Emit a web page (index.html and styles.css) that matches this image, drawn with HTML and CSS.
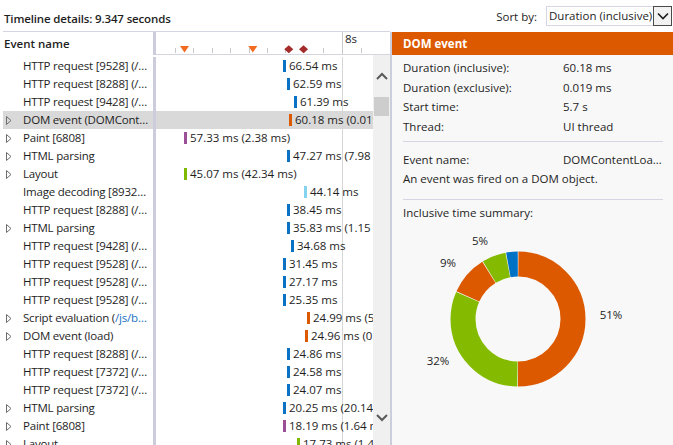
FILE: index.html
```html
<!DOCTYPE html>
<html lang="en">
<head>
<meta charset="utf-8">
<title>Timeline details</title>
<link rel="stylesheet" href="styles.css">
</head>
<body>
<div class="app">
  <header class="topbar">
    <div class="title">Timeline details: 9.347 seconds</div>
    <div class="sort">
      <span class="sort-label">Sort by:</span>
      <div class="select">
        <span class="select-text">Duration (inclusive)</span>
        <span class="select-btn"><svg width="12" height="8" viewBox="0 0 12 8"><polyline points="1,1.5 6,6.5 11,1.5" fill="none" stroke="#1e1e1e" stroke-width="1.6"/></svg></span>
      </div>
    </div>
  </header>
  <div class="main">
    <section class="events">
      <div class="ev-head">
        <div class="col-name">Event name</div>
        <div class="split"></div>
        <div class="ruler">
          <svg width="234" height="22" viewBox="0 0 234 22">
            <g stroke="#c9c9c9" stroke-width="1">
              <line x1="19.5" y1="16" x2="19.5" y2="21"/>
              <line x1="37.5" y1="16" x2="37.5" y2="21"/>
              <line x1="56.5" y1="16" x2="56.5" y2="21"/>
              <line x1="74.5" y1="16" x2="74.5" y2="21"/>
              <line x1="93.5" y1="16" x2="93.5" y2="21"/>
              <line x1="111.5" y1="16" x2="111.5" y2="21"/>
              <line x1="129.5" y1="16" x2="129.5" y2="21"/>
              <line x1="148.5" y1="16" x2="148.5" y2="21"/>
              <line x1="167.5" y1="16" x2="167.5" y2="21"/>
              <line x1="205.5" y1="16" x2="205.5" y2="21"/>
              <line x1="186.5" y1="0" x2="186.5" y2="22"/>
            </g>
            <text x="189" y="11" class="ruler-label">8s</text>
            <polygon points="24,14 33,14 28.5,20.5" fill="#f26b21"/>
            <polygon points="92.3,14 101.3,14 96.8,20.5" fill="#f26b21"/>
            <polygon points="132.8,13.3 137.3,17.3 132.8,21.3 128.3,17.3" fill="#a52a2a"/>
            <polygon points="147.5,13.3 152,17.3 147.5,21.3 143,17.3" fill="#a52a2a"/>
          </svg>
        </div>
      </div>
      <div class="ev-body">
        <div class="rows">
          <div class="row"><div class="name"><span class="exp"></span><span class="label">HTTP request [9528] (/…</span></div><div class="split"></div><div class="time"><span class="bar blue" style="margin-left:127px"></span><span class="val">66.54 ms</span></div></div>
          <div class="row"><div class="name"><span class="exp"></span><span class="label">HTTP request [8288] (/…</span></div><div class="split"></div><div class="time"><span class="bar blue" style="margin-left:131px"></span><span class="val">62.59 ms</span></div></div>
          <div class="row"><div class="name"><span class="exp"></span><span class="label">HTTP request [9428] (/…</span></div><div class="split"></div><div class="time"><span class="bar blue" style="margin-left:138px"></span><span class="val">61.39 ms</span></div></div>
          <div class="row selected"><div class="name"><span class="exp"><svg width="6" height="9" viewBox="0 0 6 9"><polygon points="0.5,0.5 5,4.5 0.5,8.5" fill="none" stroke="#6d6d6d" stroke-width="1"/></svg></span><span class="label">DOM event (DOMCont…</span></div><div class="split"></div><div class="time"><span class="bar orange" style="margin-left:133px"></span><span class="val">60.18 ms (0.019 ms)</span></div></div>
          <div class="row"><div class="name"><span class="exp"><svg width="6" height="9" viewBox="0 0 6 9"><polygon points="0.5,0.5 5,4.5 0.5,8.5" fill="none" stroke="#6d6d6d" stroke-width="1"/></svg></span><span class="label">Paint [6808]</span></div><div class="split"></div><div class="time"><span class="bar purple" style="margin-left:28px"></span><span class="val">57.33 ms (2.38 ms)</span></div></div>
          <div class="row"><div class="name"><span class="exp"><svg width="6" height="9" viewBox="0 0 6 9"><polygon points="0.5,0.5 5,4.5 0.5,8.5" fill="none" stroke="#6d6d6d" stroke-width="1"/></svg></span><span class="label">HTML parsing</span></div><div class="split"></div><div class="time"><span class="bar blue" style="margin-left:131px"></span><span class="val">47.27 ms (7.98 ms)</span></div></div>
          <div class="row"><div class="name"><span class="exp"><svg width="6" height="9" viewBox="0 0 6 9"><polygon points="0.5,0.5 5,4.5 0.5,8.5" fill="none" stroke="#6d6d6d" stroke-width="1"/></svg></span><span class="label">Layout</span></div><div class="split"></div><div class="time"><span class="bar green" style="margin-left:28px"></span><span class="val">45.07 ms (42.34 ms)</span></div></div>
          <div class="row"><div class="name"><span class="exp"></span><span class="label">Image decoding [8932…</span></div><div class="split"></div><div class="time"><span class="bar lightblue" style="margin-left:148px"></span><span class="val">44.14 ms</span></div></div>
          <div class="row"><div class="name"><span class="exp"></span><span class="label">HTTP request [8288] (/…</span></div><div class="split"></div><div class="time"><span class="bar blue" style="margin-left:131px"></span><span class="val">38.45 ms</span></div></div>
          <div class="row"><div class="name"><span class="exp"><svg width="6" height="9" viewBox="0 0 6 9"><polygon points="0.5,0.5 5,4.5 0.5,8.5" fill="none" stroke="#6d6d6d" stroke-width="1"/></svg></span><span class="label">HTML parsing</span></div><div class="split"></div><div class="time"><span class="bar blue" style="margin-left:131px"></span><span class="val">35.83 ms (1.15 ms)</span></div></div>
          <div class="row"><div class="name"><span class="exp"></span><span class="label">HTTP request [9428] (/…</span></div><div class="split"></div><div class="time"><span class="bar blue" style="margin-left:135px"></span><span class="val">34.68 ms</span></div></div>
          <div class="row"><div class="name"><span class="exp"></span><span class="label">HTTP request [9528] (/…</span></div><div class="split"></div><div class="time"><span class="bar blue" style="margin-left:127px"></span><span class="val">31.45 ms</span></div></div>
          <div class="row"><div class="name"><span class="exp"></span><span class="label">HTTP request [9528] (/…</span></div><div class="split"></div><div class="time"><span class="bar blue" style="margin-left:127px"></span><span class="val">27.17 ms</span></div></div>
          <div class="row"><div class="name"><span class="exp"></span><span class="label">HTTP request [9528] (/…</span></div><div class="split"></div><div class="time"><span class="bar blue" style="margin-left:127px"></span><span class="val">25.35 ms</span></div></div>
          <div class="row"><div class="name"><span class="exp"><svg width="6" height="9" viewBox="0 0 6 9"><polygon points="0.5,0.5 5,4.5 0.5,8.5" fill="none" stroke="#6d6d6d" stroke-width="1"/></svg></span><span class="label">Script evaluation (<span class="link">/js/b…</span></span></div><div class="split"></div><div class="time"><span class="bar orange" style="margin-left:151px"></span><span class="val">24.99 ms (5.12 ms)</span></div></div>
          <div class="row"><div class="name"><span class="exp"><svg width="6" height="9" viewBox="0 0 6 9"><polygon points="0.5,0.5 5,4.5 0.5,8.5" fill="none" stroke="#6d6d6d" stroke-width="1"/></svg></span><span class="label">DOM event (load)</span></div><div class="split"></div><div class="time"><span class="bar orange" style="margin-left:149px"></span><span class="val">24.96 ms (0.02 ms)</span></div></div>
          <div class="row"><div class="name"><span class="exp"></span><span class="label">HTTP request [8288] (/…</span></div><div class="split"></div><div class="time"><span class="bar blue" style="margin-left:131px"></span><span class="val">24.86 ms</span></div></div>
          <div class="row"><div class="name"><span class="exp"></span><span class="label">HTTP request [7372] (/…</span></div><div class="split"></div><div class="time"><span class="bar blue" style="margin-left:131px"></span><span class="val">24.58 ms</span></div></div>
          <div class="row"><div class="name"><span class="exp"></span><span class="label">HTTP request [7372] (/…</span></div><div class="split"></div><div class="time"><span class="bar blue" style="margin-left:131px"></span><span class="val">24.07 ms</span></div></div>
          <div class="row"><div class="name"><span class="exp"><svg width="6" height="9" viewBox="0 0 6 9"><polygon points="0.5,0.5 5,4.5 0.5,8.5" fill="none" stroke="#6d6d6d" stroke-width="1"/></svg></span><span class="label">HTML parsing</span></div><div class="split"></div><div class="time"><span class="bar blue" style="margin-left:127px"></span><span class="val">20.25 ms (20.14 ms)</span></div></div>
          <div class="row"><div class="name"><span class="exp"><svg width="6" height="9" viewBox="0 0 6 9"><polygon points="0.5,0.5 5,4.5 0.5,8.5" fill="none" stroke="#6d6d6d" stroke-width="1"/></svg></span><span class="label">Paint [6808]</span></div><div class="split"></div><div class="time"><span class="bar purple" style="margin-left:127px"></span><span class="val">18.19 ms (1.64 ms)</span></div></div>
          <div class="row"><div class="name"><span class="exp"><svg width="6" height="9" viewBox="0 0 6 9"><polygon points="0.5,0.5 5,4.5 0.5,8.5" fill="none" stroke="#6d6d6d" stroke-width="1"/></svg></span><span class="label">Layout</span></div><div class="split"></div><div class="time"><span class="bar green" style="margin-left:141px"></span><span class="val">17.73 ms (1.45 ms)</span></div></div>
        </div>
        <div class="scrollbar">
          <div class="sb-btn sb-up"><svg width="12" height="8" viewBox="0 0 12 8"><polyline points="1,7 6,2 11,7" fill="none" stroke="#5a5a5a" stroke-width="2"/></svg></div>
          <div class="sb-thumb"></div>
          <div class="sb-track"></div>
          <div class="sb-btn sb-down"><svg width="12" height="8" viewBox="0 0 12 8"><polyline points="1,1 6,6 11,1" fill="none" stroke="#5a5a5a" stroke-width="2"/></svg></div>
        </div>
      </div>
    </section>
    <div class="vsplit"></div>
    <aside class="details">
      <div class="dhead">DOM event</div>
      <div class="dbody">
        <div class="kv">
          <span>Duration (inclusive):</span><span>60.18 ms</span>
          <span>Duration (exclusive):</span><span>0.019 ms</span>
          <span>Start time:</span><span>5.7 s</span>
          <span>Thread:</span><span>UI thread</span>
        </div>
        <div class="hr hr1"></div>
        <div class="kv kv2">
          <span>Event name:</span><span class="ell">DOMContentLoa…</span>
        </div>
        <div class="line">An event was fired on a DOM object.</div>
        <div class="hr hr2"></div>
        <div class="line summary">Inclusive time summary:</div>
        <svg class="donut" width="260" height="220" viewBox="0 0 260 220">
          <g transform="rotate(-90 115 97)" fill="none" stroke-width="25">
            <circle cx="115" cy="97" r="55" stroke="#dd5900" stroke-dasharray="172.1 345.6" stroke-dashoffset="-0.38"/>
            <circle cx="115" cy="97" r="55" stroke="#84bb00" stroke-dasharray="108.4 345.6" stroke-dashoffset="-173.08"/>
            <circle cx="115" cy="97" r="55" stroke="#dd5900" stroke-dasharray="32.35 345.6" stroke-dashoffset="-282.03"/>
            <circle cx="115" cy="97" r="55" stroke="#84bb00" stroke-dasharray="19.77 345.6" stroke-dashoffset="-314.96"/>
            <circle cx="115" cy="97" r="55" stroke="#0072c6" stroke-dasharray="9.5 345.6" stroke-dashoffset="-335.31"/>
          </g>
          <g class="pct">
            <text x="208" y="92">51%</text>
            <text x="35" y="138">32%</text>
            <text x="45" y="40">9%</text>
            <text x="77" y="18">5%</text>
          </g>
        </svg>
      </div>
    </aside>
  </div>
</div>
</body>
</html>
```
FILE: styles.css
```css
* { box-sizing: border-box; }
html, body { margin: 0; padding: 0; }
body {
  width: 673px;
  height: 445px;
  overflow: hidden;
  background: #ffffff;
  color: #1e1e1e;
  font-family: "Open Sans", "Noto Sans", "Liberation Sans", sans-serif;
  font-size: 11.5px;
}
.app { width: 673px; height: 445px; display: flex; flex-direction: column; }

.topbar {
  height: 31px;
  display: flex;
  justify-content: space-between;
  align-items: flex-start;
  padding: 0 1px 0 4px;
}
.title { margin-top: 11px; line-height: 16px; font-weight: 600; letter-spacing: -0.15px; }
.sort { margin-top: 6px; display: flex; align-items: center; height: 20px; }
.sort-label { margin-right: 9px; }
.select {
  width: 126px;
  height: 20px;
  display: flex;
  align-items: center;
  border: 1px solid #d6d7e4;
  border-right: none;
  background: #fff;
}
.select-text { flex: 1; padding-left: 2px; line-height: 18px; }
.select-btn {
  width: 19px;
  height: 20px;
  margin-top: -1px;
  margin-bottom: -1px;
  border: 1px solid #4a4a4a;
  background: #f2f2f2;
  display: flex;
  align-items: center;
  justify-content: center;
}

.main { flex: 1; display: flex; min-height: 0; }

.events { width: 390px; padding-left: 3px; display: flex; flex-direction: column; }
.ev-head {
  height: 24px;
  border-top: 1px solid #d3d5e1;
  display: grid;
  grid-template-columns: 150px 3px 234px;
}
.col-name { line-height: 23px; padding-left: 1px; font-weight: 600; }
.split { background: #cbccdc; }
.ruler { border-bottom: 1px solid #d3d5e1; height: 23px; }
.ruler svg { display: block; }
.ruler-label { font-family: "Open Sans", "Noto Sans", sans-serif; font-size: 11.5px; fill: #1e1e1e; }

.ev-body { flex: 1; display: flex; min-height: 0; }
.rows { width: 370px; overflow: hidden; padding-top: 2px; }
.row {
  height: 18px;
  display: grid;
  grid-template-columns: 150px 3px 217px;
  line-height: 18px;
}
.row.selected .name, .row.selected .time { background-color: #d9d9d9; }
.name { display: flex; align-items: center; min-width: 0; padding-right: 1px; white-space: nowrap; }
.exp { width: 20px; flex-shrink: 0; display: flex; align-items: center; padding-left: 3px; }
.exp svg { display: block; }
.label { flex: 1; min-width: 0; overflow: hidden; text-overflow: ellipsis; letter-spacing: -0.2px; }
.link { color: #1a6fc0; }
.time {
  display: flex;
  align-items: center;
  overflow: hidden;
  white-space: nowrap;
  background-image: linear-gradient(to right, transparent 186px, #d6d6d6 186px, #d6d6d6 187px, transparent 187px);
}
.bar { width: 3px; height: 12px; flex-shrink: 0; }
.bar.blue { background: #0a72c4; }
.bar.orange { background: #dd5900; }
.bar.purple { background: #9b4f96; }
.bar.green { background: #7fba00; }
.bar.lightblue { background: #86d3f0; }
.val { margin-left: 3px; }

.scrollbar { width: 17px; background: #f0f0f0; display: flex; flex-direction: column; }
.sb-btn { display: flex; align-items: center; justify-content: center; }
.sb-up { height: 42px; }
.sb-thumb { height: 19px; margin: 0 1px; background: #cdcdcd; }
.sb-track { flex: 1; }
.sb-down { height: 54px; }

.vsplit { width: 3px; background: #cbccdc; margin-top: 1px; }

.details { flex: 1; background: #f8f8f8; display: flex; flex-direction: column; margin-top: 1px; }
.dhead {
  height: 23px;
  background: #dd5900;
  color: #ffffff;
  font-weight: 700;
  line-height: 23px;
  padding-left: 11px;
}
.dbody { padding: 3px 10px 0 11px; display: flex; flex-direction: column; }
.kv { display: grid; grid-template-columns: 160px 99px; line-height: 19.6px; }
.ell { overflow: hidden; white-space: nowrap; text-overflow: ellipsis; }
.hr { height: 1px; background: #d5d6e2; }
.hr1 { margin-top: 5px; margin-bottom: 7.5px; }
.line { line-height: 19.6px; }
.hr2 { margin-top: 9.5px; margin-bottom: 3px; }
.donut { display: block; }
.pct text {
  font-family: "Open Sans", "Noto Sans", sans-serif;
  font-size: 11.5px;
  fill: #1e1e1e;
  text-anchor: middle;
  dominant-baseline: central;
}
```
